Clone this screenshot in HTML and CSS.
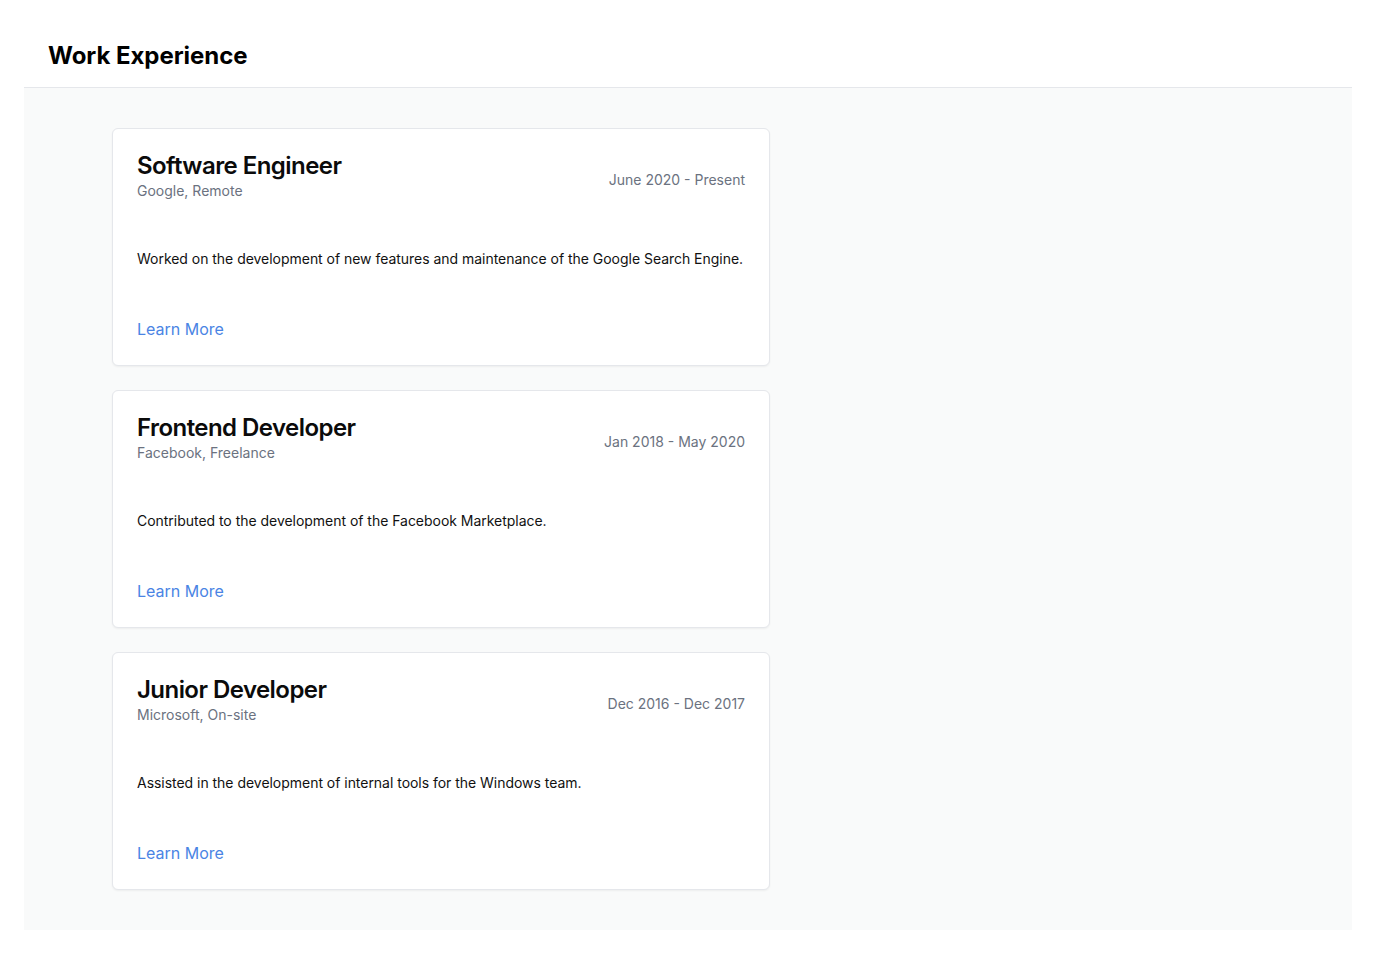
FILE: index.html
```html
<!DOCTYPE html>
<html lang="en">
<head>
<meta charset="utf-8">
<title>Work Experience</title>
<link rel="stylesheet" href="styles.css">
</head>
<body>
<div class="page">
  <header class="header">
    <h1 class="heading">Work Experience</h1>
  </header>
  <section class="section">
    <div class="list">
      <article class="card">
        <div class="card-head">
          <div>
            <h2 class="title">Software Engineer</h2>
            <p class="company">Google, Remote</p>
          </div>
          <p class="date">June 2020 - Present</p>
        </div>
        <p class="desc">Worked on the development of new features and maintenance of the Google Search Engine.</p>
        <a class="link" href="#">Learn More</a>
      </article>
      <article class="card">
        <div class="card-head">
          <div>
            <h2 class="title">Frontend Developer</h2>
            <p class="company">Facebook, Freelance</p>
          </div>
          <p class="date">Jan 2018 - May 2020</p>
        </div>
        <p class="desc">Contributed to the development of the Facebook Marketplace.</p>
        <a class="link" href="#">Learn More</a>
      </article>
      <article class="card">
        <div class="card-head">
          <div>
            <h2 class="title">Junior Developer</h2>
            <p class="company">Microsoft, On-site</p>
          </div>
          <p class="date">Dec 2016 - Dec 2017</p>
        </div>
        <p class="desc">Assisted in the development of internal tools for the Windows team.</p>
        <a class="link" href="#">Learn More</a>
      </article>
    </div>
  </section>
</div>
</body>
</html>
```

FILE: styles.css
```css
* { box-sizing: border-box; }
html, body { margin: 0; padding: 0; background: #ffffff; }
body { font-family: Inter, "Noto Sans", sans-serif; color: #111827; }
.page { padding: 24px 24px 25px; }
.header {
  padding: 16px 24px 15px;
  border-bottom: 1px solid #e5e7eb;
}
.heading {
  margin: 0;
  font-size: 24px;
  line-height: 32px;
  font-weight: 700;
  color: #000;
  letter-spacing: -0.05px;
}
.section {
  background: #f9fafa;
  padding: 40px 88px;
}
.list {
  width: 658px;
  display: flex;
  flex-direction: column;
  gap: 24px;
}
.card {
  background: #fff;
  border: 1px solid #e5e7eb;
  border-radius: 6px;
  box-shadow: 0 1px 2px rgba(0,0,0,0.05);
  padding: 23px 24px 24px;
  display: flex;
  flex-direction: column;
}
.card-head {
  display: flex;
  justify-content: space-between;
  align-items: center;
}
.title {
  margin: 0;
  font-size: 24px;
  line-height: 28px;
  font-weight: 600;
  color: #0b0b0b;
  letter-spacing: -0.55px;
}
.company {
  margin: 1px 0 0;
  font-size: 14px;
  line-height: 20px;
  color: #6b7280;
}
.date {
  margin: 7px 0 0;
  font-size: 14px;
  line-height: 20px;
  color: #6b7280;
}
.desc {
  margin: 48px 0 48px;
  font-size: 14px;
  line-height: 20px;
  color: #111;
  letter-spacing: -0.03px;
  white-space: nowrap;
}
.link {
  font-size: 16px;
  line-height: 24px;
  color: #4a84e4;
  text-decoration: none;
  align-self: flex-start;
}
```
